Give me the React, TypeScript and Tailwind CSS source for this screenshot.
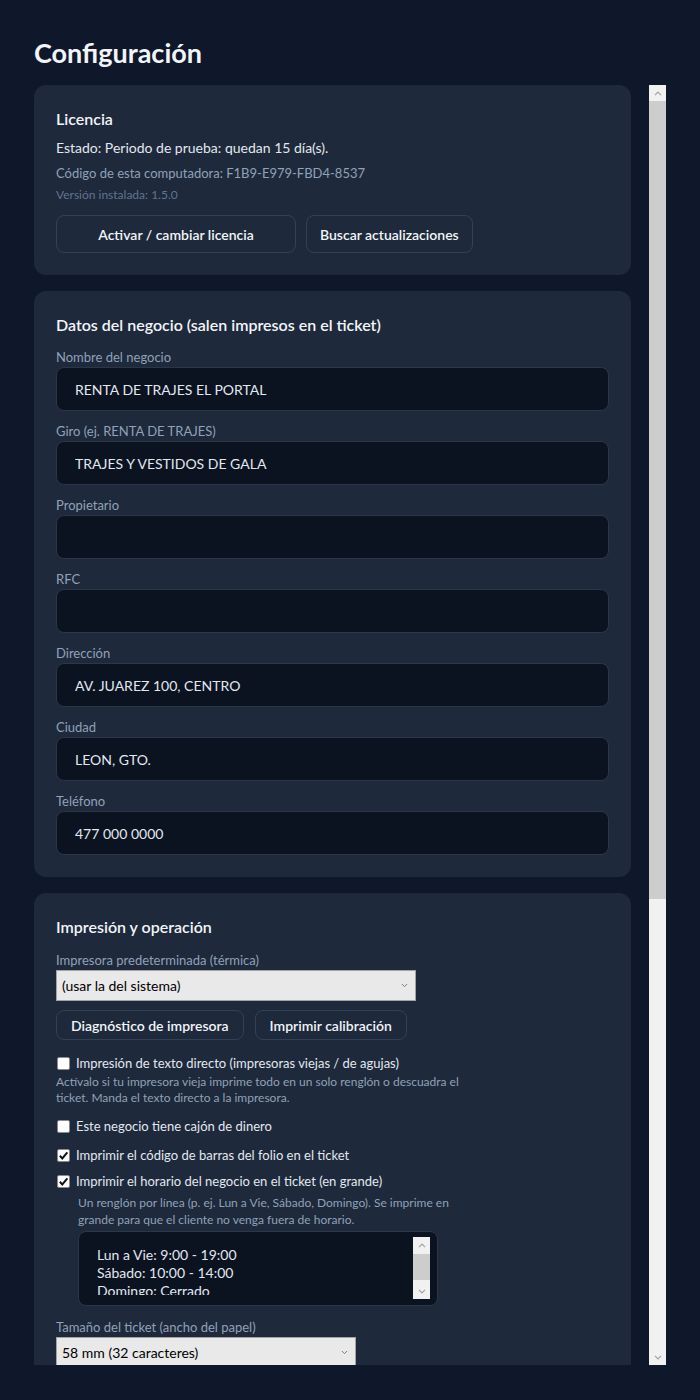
import React from 'react';

const fields: { label: string; value: string }[] = [
  { label: 'Nombre del negocio', value: 'RENTA DE TRAJES EL PORTAL' },
  { label: 'Giro (ej. RENTA DE TRAJES)', value: 'TRAJES Y VESTIDOS DE GALA' },
  { label: 'Propietario', value: '' },
  { label: 'RFC', value: '' },
  { label: 'Dirección', value: 'AV. JUAREZ 100, CENTRO' },
  { label: 'Ciudad', value: 'LEON, GTO.' },
  { label: 'Teléfono', value: '477 000 0000' },
];

const Arrow = ({ down }: { down?: boolean }) => (
  <svg viewBox="0 0 8 5" className="w-[8px] h-[5px]">
    <path d={down ? 'M1 0.8 L4 3.8 L7 0.8' : 'M1 4.2 L4 1.2 L7 4.2'} stroke="#a3a3a3" strokeWidth="1.2" fill="none" />
  </svg>
);

const Scrollbar = ({ thumb, className }: { thumb: string; className?: string }) => (
  <div className={`w-[17px] flex flex-col bg-[#f1f1f1] shrink-0 ${className ?? ''}`}>
    <div className="h-[16px] flex items-center justify-center shrink-0">
      <Arrow />
    </div>
    <div className="flex-1 flex flex-col">
      <div className={`bg-[#cdcdcd] ${thumb}`} />
    </div>
    <div className="h-[16px] flex items-center justify-center shrink-0">
      <Arrow down />
    </div>
  </div>
);

const Field = ({ label, value }: { label: string; value: string }) => (
  <div className="mt-[11px]">
    <div className="text-[13px] leading-[19px] text-slate-400">{label}</div>
    <input
      readOnly
      value={value}
      className="w-full h-[44px] rounded-lg border border-[#2b3749] bg-[#0b1220] px-[18px] text-[14px] text-slate-200 outline-none"
    />
  </div>
);

const Check = ({ checked, label, className }: { checked?: boolean; label: string; className?: string }) => (
  <label className={`flex items-center gap-[6px] text-[13px] leading-[18px] text-slate-200 ${className ?? ''}`}>
    <span className="ml-px w-[13px] h-[13px] bg-white border border-[#8c8c8c] rounded-[2px] flex items-center justify-center shrink-0">
      {checked && (
        <svg viewBox="0 0 12 12" className="w-[11px] h-[11px]">
          <path d="M2 6.3 L4.7 9.2 L10.2 2.6" stroke="#111" strokeWidth="2.1" fill="none" />
        </svg>
      )}
    </span>
    {label}
  </label>
);

const FakeSelect = ({ value, width }: { value: string; width: string }) => (
  <div
    className={`${width} h-[31px] bg-[#e9e9e9] border border-[#a3a3a3] flex items-center justify-between pl-[5px] pr-[7px] text-[14px] text-black`}
  >
    <span>{value}</span>
    <svg viewBox="0 0 8 5" className="w-[7px] h-[5px]">
      <path d="M1 0.8 L4 3.8 L7 0.8" stroke="#7a7a7a" strokeWidth="1.1" fill="none" />
    </svg>
  </div>
);

const Card = ({ children }: { children: React.ReactNode }) => (
  <section className="rounded-xl bg-[#1e293b] p-[22px] shrink-0">{children}</section>
);

export default function App() {
  return (
    <div className="w-[700px] h-[1400px] bg-[#0f172a] px-[34px] pt-[34px] flex flex-col font-['Lato',sans-serif]">
      <h1 className="text-[27px] leading-[38px] font-bold text-slate-100 mb-[13px]">Configuración</h1>

      <div className="flex gap-[18px] h-[1280px]">
        <div className="w-[597px] overflow-hidden flex flex-col gap-4">
          <Card>
            <h2 className="text-[16px] leading-6 font-semibold text-slate-100">Licencia</h2>
            <p className="mt-[7px] text-[14px] leading-5 text-slate-200">Estado: Periodo de prueba: quedan 15 día(s).</p>
            <p className="mt-[5px] text-[13px] leading-5 text-slate-400">Código de esta computadora: F1B9-E979-FBD4-8537</p>
            <p className="mt-[4px] text-[12px] leading-4 text-slate-500">Versión instalada: 1.5.0</p>
            <div className="mt-[12px] flex gap-[10px]">
              <button className="min-w-[240px] h-[38px] px-[13px] rounded-lg border border-[#334155] text-[14px] font-semibold text-slate-100">
                Activar / cambiar licencia
              </button>
              <button className="h-[38px] px-[13px] rounded-lg border border-[#334155] text-[14px] font-semibold text-slate-100">
                Buscar actualizaciones
              </button>
            </div>
          </Card>

          <Card>
            <h2 className="text-[16px] leading-6 font-semibold text-slate-100">Datos del negocio (salen impresos en el ticket)</h2>
            {fields.map((f) => (
              <Field key={f.label} label={f.label} value={f.value} />
            ))}
          </Card>

          <Card>
            <h2 className="text-[16px] leading-6 font-semibold text-slate-100">Impresión y operación</h2>
            <div className="mt-[12px] text-[13px] leading-[19px] text-slate-400">Impresora predeterminada (térmica)</div>
            <FakeSelect value="(usar la del sistema)" width="w-[360px]" />
            <div className="mt-[9px] flex gap-[11px]">
              <button className="h-[30px] px-[14px] rounded-lg border border-[#334155] text-[14px] font-semibold text-slate-100">
                Diagnóstico de impresora
              </button>
              <button className="h-[30px] px-[14px] rounded-lg border border-[#334155] text-[14px] font-semibold text-slate-100">
                Imprimir calibración
              </button>
            </div>

            <div className="max-w-[420px]">
              <Check className="mt-[14px]" label="Impresión de texto directo (impresoras viejas / de agujas)" />
              <p className="mt-[2px] text-[12px] leading-4 text-slate-400">
                Actívalo si tu impresora vieja imprime todo en un solo renglón o descuadra el ticket. Manda el texto directo a la impresora.
              </p>
              <Check className="mt-[11px]" label="Este negocio tiene cajón de dinero" />
              <Check className="mt-[11px]" checked label="Imprimir el código de barras del folio en el ticket" />
              <Check className="mt-[8px]" checked label="Imprimir el horario del negocio en el ticket (en grande)" />
              <div className="pl-[22px]">
                <p className="mt-[4px] text-[12px] leading-[17px] text-slate-400">
                  Un renglón por línea (p. ej. Lun a Vie, Sábado, Domingo). Se imprime en grande para que el cliente no venga fuera de horario.
                </p>
                <div className="mt-[3px] w-[360px] h-[75px] rounded-lg border border-[#2b3749] bg-[#0b1220] flex items-start pt-[5px] pr-[7px]">
                  <div className="flex-1 h-[58px] overflow-hidden pl-[18px] pt-[9px] text-[14px] leading-[18px] text-slate-200">
                    <div>Lun a Vie: 9:00 - 19:00</div>
                    <div>Sábado: 10:00 - 14:00</div>
                    <div>Domingo: Cerrado</div>
                  </div>
                  <Scrollbar className="h-[62px]" thumb="h-[26px] mt-px" />
                </div>
              </div>
            </div>

            <div className="mt-[12px] text-[13px] leading-[19px] text-slate-400">Tamaño del ticket (ancho del papel)</div>
            <FakeSelect value="58 mm (32 caracteres)" width="w-[300px]" />
          </Card>
        </div>

        <Scrollbar thumb="h-[798px]" />
      </div>
    </div>
  );
}
